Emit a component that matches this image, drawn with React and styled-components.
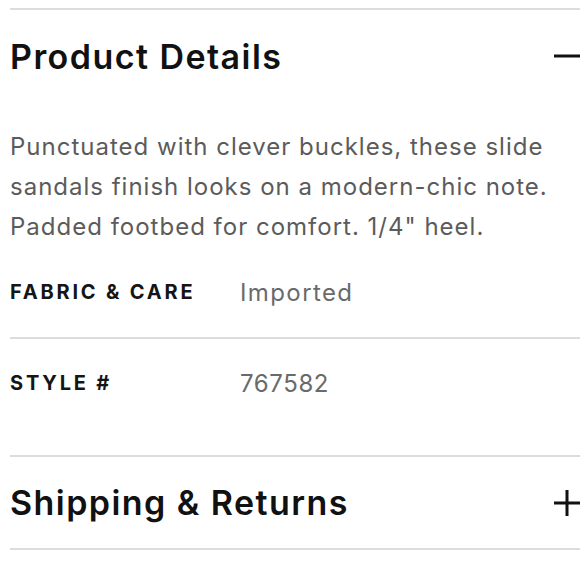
import React, {useState} from 'react';
import styled, {createGlobalStyle} from 'styled-components';

const GlobalStyle = createGlobalStyle`
  body {
    margin: 0;
    background: #fff;
    font-family: Inter, "Noto Sans", sans-serif;
    overflow: hidden;
  }
`;

const Page = styled.div`
  width: 570px;
  padding: 8px 0 0 10px;
`;

const Section = styled.section`
  border-top: 2px solid #dcdcdc;
  padding-bottom: ${props => props.bottom || 0}px;
  &:last-child {
    border-bottom: 2px solid #dcdcdc;
  }
`;

const Header = styled.div`
  height: ${props => props.height}px;
  display: flex;
  align-items: center;
  justify-content: space-between;
  cursor: pointer;
`;

const Title = styled.h2`
  margin: 0;
  font-size: 34px;
  font-weight: 600;
  color: #111;
  letter-spacing: 1.45px;
  white-space: nowrap;
`;

const Toggle = styled.svg`
  width: 26px;
  height: 26px;
  flex: none;
`;

const Description = styled.p`
  margin: 0;
  padding-top: 25px;
  font-size: 24px;
  line-height: 40px;
  color: #5b5b5b;
  letter-spacing: 1px;
`;

const Row = styled.div`
  display: grid;
  grid-template-columns: 230px 1fr;
  align-items: center;
  height: ${props => props.height}px;
  border-top: ${props => (props.divided ? '2px solid #dcdcdc' : 'none')};
`;

const Label = styled.span`
  font-size: 20px;
  font-weight: 700;
  color: #151515;
  letter-spacing: 2.8px;
  text-transform: uppercase;
  white-space: nowrap;
`;

const Value = styled.span`
  font-size: 24px;
  color: #6a6a6a;
  letter-spacing: ${props => props.spacing}px;
`;

const ToggleIcon = ({open}) => (
  <Toggle viewBox="0 0 26 26">
    <rect x="0" y="11.5" width="26" height="3" fill="#111" />
    {!open && <rect x="11.5" y="0" width="3" height="26" fill="#111" />}
  </Toggle>
);

export default function App() {
  const [open, setOpen] = useState({details: true, shipping: false});
  const flip = key => setOpen(o => ({...o, [key]: !o[key]}));

  return (
    <Page>
      <GlobalStyle />
      <Section bottom={28}>
        <Header height={92} onClick={() => flip('details')}>
          <Title>Product Details</Title>
          <ToggleIcon open={open.details} />
        </Header>
        {open.details && (
          <>
            <Description>
              Punctuated with clever buckles, these slide sandals finish looks on a
              modern-chic note. Padded footbed for comfort. 1/4" heel.
            </Description>
            <Row height={90}>
              <Label>Fabric &amp; Care</Label>
              <Value spacing={1.4}>Imported</Value>
            </Row>
            <Row height={88} divided>
              <Label>Style #</Label>
              <Value spacing={0.6}>767582</Value>
            </Row>
          </>
        )}
      </Section>
      <Section>
        <Header height={91} onClick={() => flip('shipping')}>
          <Title>Shipping &amp; Returns</Title>
          <ToggleIcon open={open.shipping} />
        </Header>
      </Section>
    </Page>
  );
}
